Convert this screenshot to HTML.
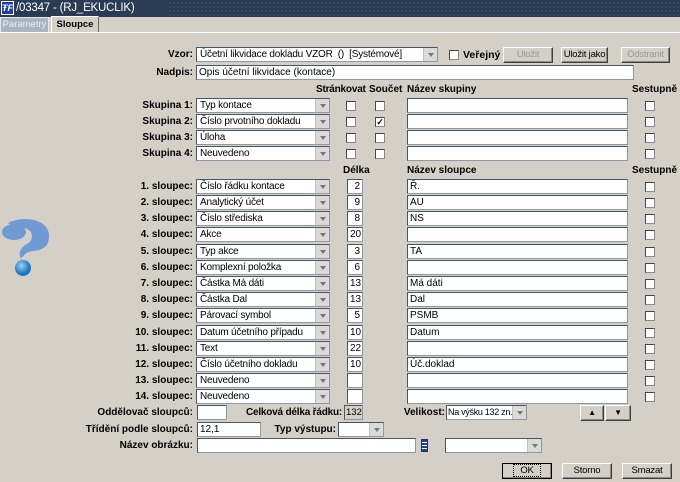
<!DOCTYPE html>
<html><head><meta charset="utf-8">
<style>
*{box-sizing:border-box;margin:0;padding:0}
body{width:680px;height:482px;background:#d4d0c8;font-family:"Liberation Sans",Arial,sans-serif;font-size:10px;color:#000;position:relative;overflow:hidden}
.a{position:absolute}
.t{position:absolute;white-space:nowrap;line-height:14px}
.l{position:absolute;white-space:nowrap;font-weight:bold;text-align:right;line-height:15px;font-size:10px}
.in{position:absolute;background:#fff;border:1px solid #8a99aa;border-top-color:#4a5563;border-left-color:#4a5563;height:15px;line-height:13px;padding-left:2px;font-size:10px;white-space:nowrap;overflow:hidden}
.sel{position:absolute;background:#fff;border:1px solid #8a99aa;border-top-color:#4a5563;border-left-color:#4a5563;height:15px;line-height:13px;padding-left:3px;font-size:10px;white-space:nowrap;letter-spacing:-0.2px}
.sel:after{content:"";position:absolute;right:0;top:0;width:13px;height:13px;background:#dcdad6;border-left:1px solid #c0c0c0}
.sel:before{content:"";position:absolute;right:3px;top:5px;width:0;height:0;border-left:3.5px solid transparent;border-right:3.5px solid transparent;border-top:4px solid #777;z-index:2}
.cb{position:absolute;width:10px;height:10px;background:#fff;border:1px solid #888;border-top-color:#444;border-left-color:#444}
.num{text-align:right;padding-right:2px}
.btn{position:absolute;height:16px;border:1px solid #fff;border-right-color:#404040;border-bottom-color:#404040;background:#d4d0c8;text-align:center;line-height:14px;font-size:9.5px;white-space:nowrap;letter-spacing:-0.2px;box-shadow:inset -1px -1px #888}
</style></head><body>
<div class="a" style="left:0;top:0;width:680px;height:17px;background:#2a3b54;background-image:radial-gradient(#566882 0.7px,transparent 0.8px);background-size:4px 4px;background-position:0 1px"></div>
<div class="a" style="left:0;top:0;width:168px;height:17px;background:#2a3b54"></div>
<div class="a" style="left:1px;top:1px;width:13px;height:14px;background:#1d3fa8;border:1px solid #fff;color:#fff;font-weight:bold;font-style:italic;font-size:9px;line-height:12px;text-align:center">ŦF</div>
<div class="t" style="left:16px;top:1px;color:#fff;font-size:11.5px;line-height:15px;letter-spacing:-0.2px">/03347 - (RJ_EKUCLIK)</div>
<div class="a" style="left:0;top:17px;width:49px;height:16px;background:#a8b4c2;border:1px solid #e8e8e8;color:#e8eef4;line-height:14px;text-align:center;font-size:9.5px">Parametry</div>
<div class="a" style="left:51px;top:16px;width:48px;height:17px;background:#d4d0c8;border:1px solid #fff;border-right-color:#666;border-bottom:none;line-height:15px;text-align:center;font-weight:bold;font-size:9.5px">Sloupce</div>
<div class="a" style="left:0;top:32px;width:680px;height:1px;background:#fff"></div>

<div class="l" style="right:487px;top:47px">Vzor:</div>
<div class="sel" style="left:196px;top:47px;width:242px">Účetní likvidace dokladu VZOR &nbsp;() &nbsp;[Systémové]</div>
<div class="cb" style="left:449px;top:50px"></div>
<div class="t" style="left:463px;top:48px;font-weight:bold;font-size:10.5px">Veřejný</div>
<div class="btn" style="left:503px;top:47px;width:50px;color:#999">Uložit</div>
<div class="btn" style="left:561px;top:47px;width:47px">Uložit jako</div>
<div class="btn" style="left:621px;top:47px;width:49px;color:#999">Odstranit</div>
<div class="l" style="right:487px;top:65px">Nadpis:</div>
<div class="in" style="left:196px;top:65px;width:438px">Opis účetní likvidace (kontace)</div>

<div class="t" style="left:316px;top:83px;font-weight:bold;letter-spacing:-0.2px">Stránkovat</div>
<div class="t" style="left:369px;top:83px;font-weight:bold">Součet</div>
<div class="t" style="left:407px;top:83px;font-weight:bold">Název skupiny</div>
<div class="t" style="left:632px;top:83px;font-weight:bold">Sestupně</div>

<div class="l" style="right:487px;top:98px">Skupina 1:</div><div class="sel" style="left:196px;top:98px;width:134px">Typ kontace</div><div class="cb" style="left:346px;top:101px"></div><div class="cb" style="left:375px;top:101px"></div><div class="in" style="left:407px;top:98px;width:221px"></div><div class="cb" style="left:645px;top:101px"></div>
<div class="l" style="right:487px;top:114px">Skupina 2:</div><div class="sel" style="left:196px;top:114px;width:134px">Číslo prvotního dokladu</div><div class="cb" style="left:346px;top:117px"></div><div class="cb" style="left:375px;top:117px;font-size:9px;line-height:8px;text-align:center;font-weight:bold">✓</div><div class="in" style="left:407px;top:114px;width:221px"></div><div class="cb" style="left:645px;top:117px"></div>
<div class="l" style="right:487px;top:130px">Skupina 3:</div><div class="sel" style="left:196px;top:130px;width:134px">Úloha</div><div class="cb" style="left:346px;top:133px"></div><div class="cb" style="left:375px;top:133px"></div><div class="in" style="left:407px;top:130px;width:221px"></div><div class="cb" style="left:645px;top:133px"></div>
<div class="l" style="right:487px;top:146px">Skupina 4:</div><div class="sel" style="left:196px;top:146px;width:134px">Neuvedeno</div><div class="cb" style="left:346px;top:149px"></div><div class="cb" style="left:375px;top:149px"></div><div class="in" style="left:407px;top:146px;width:221px"></div><div class="cb" style="left:645px;top:149px"></div>

<div class="t" style="left:343px;top:164px;font-weight:bold">Délka</div>
<div class="t" style="left:407px;top:164px;font-weight:bold">Název sloupce</div>
<div class="t" style="left:632px;top:164px;font-weight:bold">Sestupně</div>

<div class="l" style="right:487px;top:179px">1. sloupec:</div><div class="sel" style="left:196px;top:179px;width:134px">Číslo řádku kontace</div><div class="in num" style="left:347px;top:179px;width:16px">2</div><div class="in" style="left:407px;top:179px;width:221px">Ř.</div><div class="cb" style="left:645px;top:182px"></div>
<div class="l" style="right:487px;top:195px">2. sloupec:</div><div class="sel" style="left:196px;top:195px;width:134px">Analytický účet</div><div class="in num" style="left:347px;top:195px;width:16px">9</div><div class="in" style="left:407px;top:195px;width:221px">AU</div><div class="cb" style="left:645px;top:198px"></div>
<div class="l" style="right:487px;top:211px">3. sloupec:</div><div class="sel" style="left:196px;top:211px;width:134px">Číslo střediska</div><div class="in num" style="left:347px;top:211px;width:16px">8</div><div class="in" style="left:407px;top:211px;width:221px">NS</div><div class="cb" style="left:645px;top:214px"></div>
<div class="l" style="right:487px;top:227px">4. sloupec:</div><div class="sel" style="left:196px;top:227px;width:134px">Akce</div><div class="in num" style="left:347px;top:227px;width:16px">20</div><div class="in" style="left:407px;top:227px;width:221px"></div><div class="cb" style="left:645px;top:230px"></div>
<div class="l" style="right:487px;top:244px">5. sloupec:</div><div class="sel" style="left:196px;top:244px;width:134px">Typ akce</div><div class="in num" style="left:347px;top:244px;width:16px">3</div><div class="in" style="left:407px;top:244px;width:221px">TA</div><div class="cb" style="left:645px;top:247px"></div>
<div class="l" style="right:487px;top:260px">6. sloupec:</div><div class="sel" style="left:196px;top:260px;width:134px">Komplexní položka</div><div class="in num" style="left:347px;top:260px;width:16px">6</div><div class="in" style="left:407px;top:260px;width:221px"></div><div class="cb" style="left:645px;top:263px"></div>
<div class="l" style="right:487px;top:276px">7. sloupec:</div><div class="sel" style="left:196px;top:276px;width:134px">Částka Má dáti</div><div class="in num" style="left:347px;top:276px;width:16px">13</div><div class="in" style="left:407px;top:276px;width:221px">Má dáti</div><div class="cb" style="left:645px;top:279px"></div>
<div class="l" style="right:487px;top:292px">8. sloupec:</div><div class="sel" style="left:196px;top:292px;width:134px">Částka Dal</div><div class="in num" style="left:347px;top:292px;width:16px">13</div><div class="in" style="left:407px;top:292px;width:221px">Dal</div><div class="cb" style="left:645px;top:295px"></div>
<div class="l" style="right:487px;top:308px">9. sloupec:</div><div class="sel" style="left:196px;top:308px;width:134px">Párovací symbol</div><div class="in num" style="left:347px;top:308px;width:16px">5</div><div class="in" style="left:407px;top:308px;width:221px">PSMB</div><div class="cb" style="left:645px;top:311px"></div>
<div class="l" style="right:487px;top:325px">10. sloupec:</div><div class="sel" style="left:196px;top:325px;width:134px">Datum účetního případu</div><div class="in num" style="left:347px;top:325px;width:16px">10</div><div class="in" style="left:407px;top:325px;width:221px">Datum</div><div class="cb" style="left:645px;top:328px"></div>
<div class="l" style="right:487px;top:341px">11. sloupec:</div><div class="sel" style="left:196px;top:341px;width:134px">Text</div><div class="in num" style="left:347px;top:341px;width:16px">22</div><div class="in" style="left:407px;top:341px;width:221px"></div><div class="cb" style="left:645px;top:344px"></div>
<div class="l" style="right:487px;top:357px">12. sloupec:</div><div class="sel" style="left:196px;top:357px;width:134px">Číslo účetního dokladu</div><div class="in num" style="left:347px;top:357px;width:16px">10</div><div class="in" style="left:407px;top:357px;width:221px">Úč.doklad</div><div class="cb" style="left:645px;top:360px"></div>
<div class="l" style="right:487px;top:373px">13. sloupec:</div><div class="sel" style="left:196px;top:373px;width:134px">Neuvedeno</div><div class="in num" style="left:347px;top:373px;width:16px"></div><div class="in" style="left:407px;top:373px;width:221px"></div><div class="cb" style="left:645px;top:376px"></div>
<div class="l" style="right:487px;top:389px">14. sloupec:</div><div class="sel" style="left:196px;top:389px;width:134px">Neuvedeno</div><div class="in num" style="left:347px;top:389px;width:16px"></div><div class="in" style="left:407px;top:389px;width:221px"></div><div class="cb" style="left:645px;top:392px"></div>

<div class="l" style="right:487px;top:405px">Oddělovač sloupců:</div><div class="in" style="left:197px;top:405px;width:30px"></div>
<div class="l" style="right:338px;top:405px;letter-spacing:-0.2px">Celková délka řádku:</div><div class="in" style="left:344px;top:405px;width:19px;background:#d4d0c8;padding-left:1px;font-size:9.5px">132</div>
<div class="l" style="right:235px;top:405px">Velikost:</div><div class="sel" style="left:446px;top:405px;width:81px;font-size:9px;letter-spacing:-0.3px;padding-left:1px">Na výšku 132 zn.</div>
<div class="btn" style="left:580px;top:405px;width:24px;font-size:8px">▲</div>
<div class="btn" style="left:605px;top:405px;width:26px;font-size:8px">▼</div>
<div class="l" style="right:487px;top:422px">Třídění podle sloupců:</div><div class="in" style="left:197px;top:422px;width:64px">12,1</div>
<div class="l" style="right:344px;top:422px">Typ výstupu:</div><div class="sel" style="left:338px;top:422px;width:46px"></div>
<div class="l" style="right:487px;top:438px">Název obrázku:</div><div class="in" style="left:197px;top:438px;width:219px"></div>
<div class="a" style="left:421px;top:439px;width:7px;height:13px;background:repeating-linear-gradient(#2040a0 0 2px,#fff 2px 3px);border:1px solid #203060"></div>
<div class="sel" style="left:445px;top:438px;width:97px"></div>
<div class="btn" style="left:502px;top:463px;width:50px;outline:1px solid #000;outline-offset:-1px"><span style="border:1px dotted #000;padding:0 6px">OK</span></div>
<div class="btn" style="left:562px;top:463px;width:50px">Storno</div>
<div class="btn" style="left:622px;top:463px;width:50px">Smazat</div>

<svg class="a" style="left:0;top:216px" width="52" height="62" viewBox="0 0 52 62">
<defs><radialGradient id="g" cx="40%" cy="35%"><stop offset="0" stop-color="#9fd0f5"/><stop offset="1" stop-color="#1e78c0"/></radialGradient></defs>
<ellipse cx="14" cy="16" rx="12" ry="8" fill="#6f9ad3"/>
<path d="M8 7 Q20 1 34 4 Q50 8 49 22 Q48 34 33 35 Q25 36 23 41 L20 41 Q18 33 27 28 Q34 24 31 16 Q26 10 16 12 Z" fill="#6f9ad3"/>
<path d="M21 41 L21 44" stroke="#b0bcc8" stroke-width="2"/>
<circle cx="23" cy="52" r="8" fill="url(#g)"/>
</svg>
</body></html>
